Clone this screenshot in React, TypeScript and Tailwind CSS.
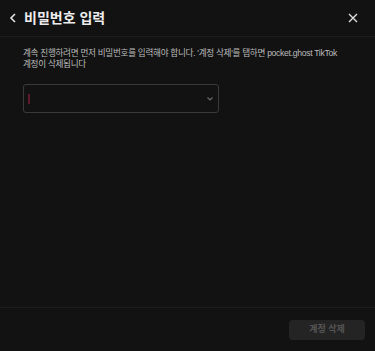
import { FC } from 'react';

const App: FC = () => {
  return (
    <div
      className="flex h-[351px] w-[375px] flex-col bg-[#121212] text-white"
      style={{ fontFamily: '"Liberation Sans", "Noto Sans CJK KR", sans-serif' }}
    >
      <div className="flex h-[37px] shrink-0 items-center justify-between border-b border-[#1c1c1c] pl-[9px] pr-[17px]">
        <div className="flex items-center">
          <svg width="8" height="10" viewBox="0 0 8 10" className="mr-[7px]">
            <path d="M6 1 L2 5 L6 9" fill="none" stroke="#e6e6e6" strokeWidth="1.6" />
          </svg>
          <span className="text-[14px] font-bold leading-none text-[#ececec]">비밀번호 입력</span>
        </div>
        <svg width="10" height="10" viewBox="0 0 10 10">
          <path d="M1 1 L9 9 M9 1 L1 9" stroke="#dedede" strokeWidth="1.4" />
        </svg>
      </div>

      <div className="flex flex-1 flex-col px-[23px] pt-[11px]">
        <p className="break-keep text-[8.6px] leading-[11px] tracking-[-0.3px] text-[#bcbcbc]">
          계속 진행하려면 먼저 비밀번호를 입력해야 합니다. '계정 삭제'를 탭하면 pocket.ghost TikTok 계정이 삭제됩니다
        </p>
        <div className="mt-[14px] flex h-[29px] w-[196px] items-center justify-between rounded-[3px] border border-[#3a3a3a] pl-[4px] pr-[5px]">
          <div className="h-[10px] w-[2px] bg-[#5c1a2c]" />
          <svg width="6" height="4" viewBox="0 0 6 4">
            <path d="M0.5 0.5 L3 3 L5.5 0.5" fill="none" stroke="#6a6a6a" strokeWidth="1.2" />
          </svg>
        </div>
      </div>

      <div className="flex h-[44px] shrink-0 items-center justify-end border-t border-[#1c1c1c] pr-[10px]">
        <button className="h-[20px] w-[76px] rounded-[4px] bg-[#242424] text-[9px] font-bold text-[#555555]">
          계정 삭제
        </button>
      </div>
    </div>
  );
};

export default App;
